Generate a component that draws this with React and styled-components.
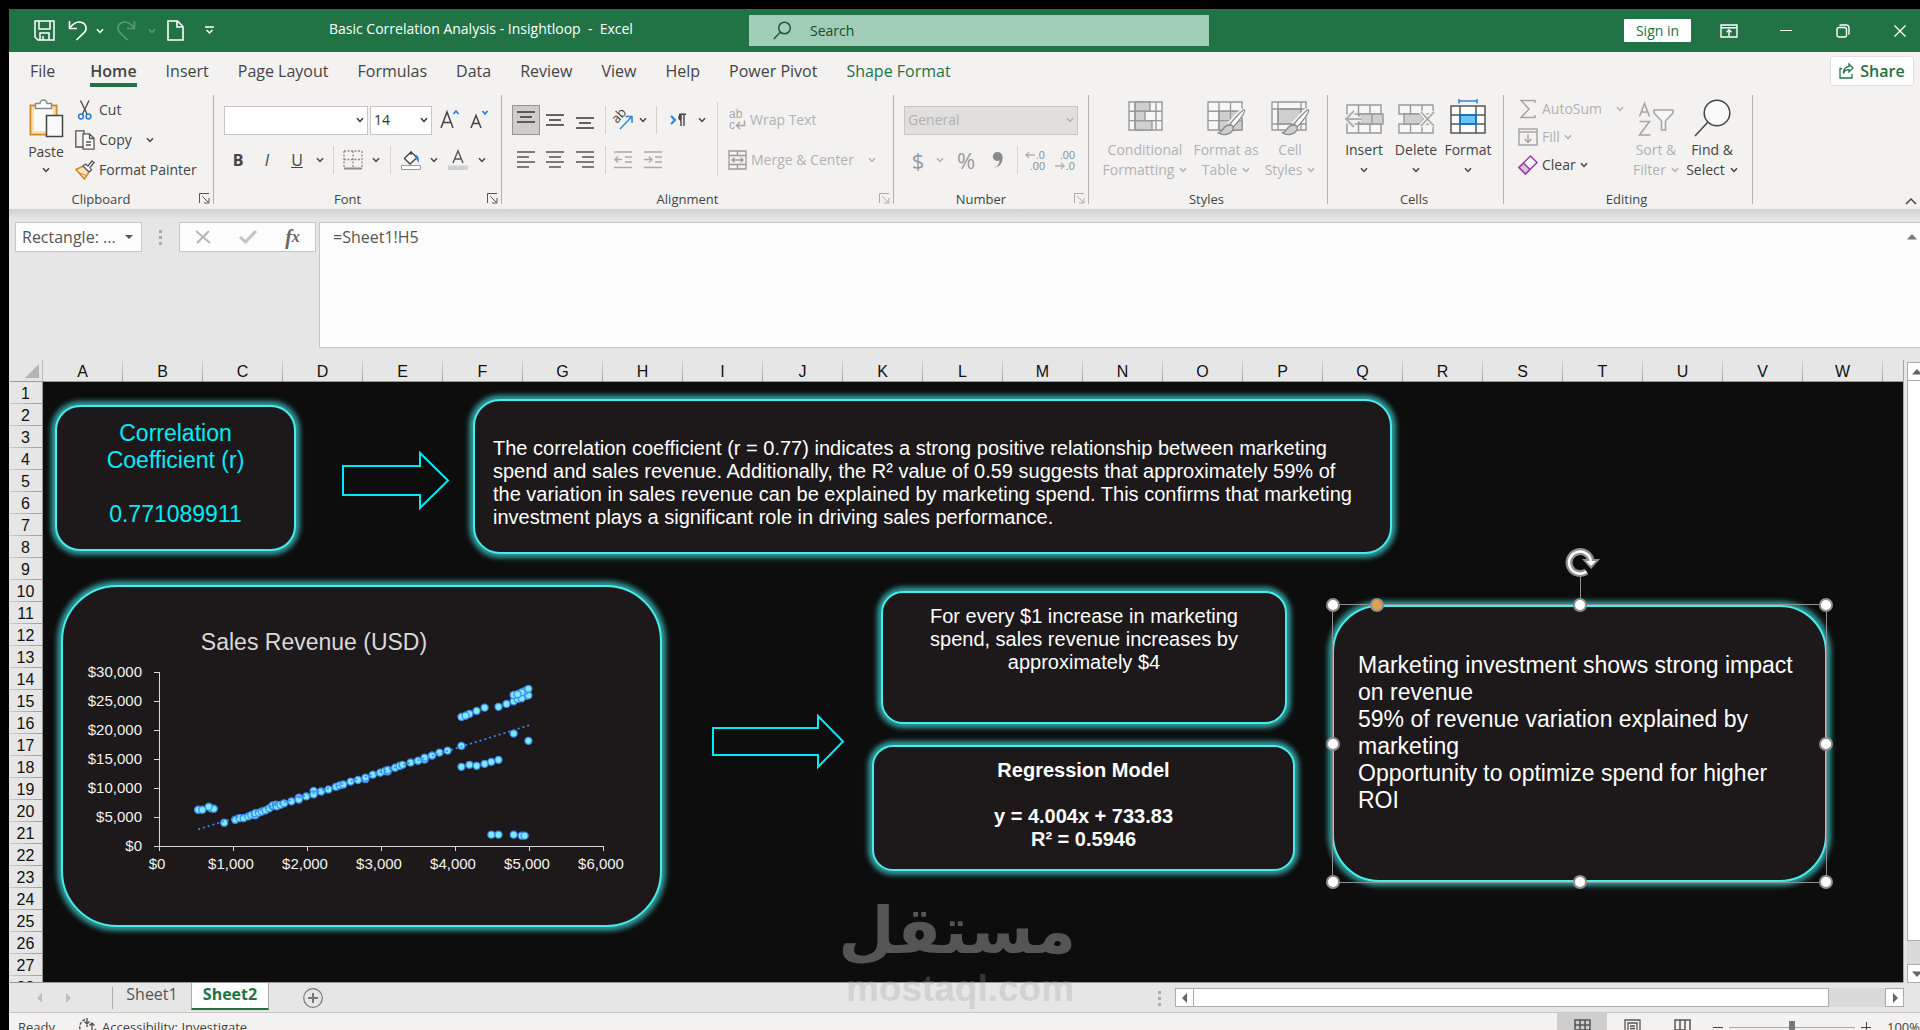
import React from 'react';
import styled, { createGlobalStyle, css } from 'styled-components';

const TABS = ['Insert', 'Page Layout', 'Formulas', 'Data', 'Review', 'View', 'Help', 'Power Pivot'];
const COLUMNS = 'ABCDEFGHIJKLMNOPQRSTUVWX'.split('');
const ROWS = Array.from({ length: 28 }, (_, i) => i + 1);

const SALES = [
    [529, 6250], [586, 6250], [705, 6480], [740, 6420], [672, 6770], [882, 4015],
    [1030, 4530], [1087, 4820], [1144, 4820], [1207, 5100], [1247, 5330], [1300, 5300],
    [1300, 5650], [1350, 5750], [1390, 5950], [1440, 6150], [1490, 6500], [1530, 6900],
    [1540, 7000], [1580, 7150], [1590, 6850], [1640, 7100], [1690, 7350], [1790, 7700],
    [1890, 8350], [1890, 8000], [1990, 8550], [2090, 9500], [2090, 8900], [2190, 9400],
    [2290, 9750], [2390, 10200], [2440, 10450], [2490, 10600], [2590, 11100], [2690, 11400],
    [2790, 11550], [2790, 11800], [2890, 12300], [2990, 12650], [3050, 12900], [3090, 12850],
    [3090, 13100], [3190, 13500], [3250, 13800], [3290, 14000], [3400, 14400], [3500, 14700],
    [3590, 14900], [3590, 15250], [3690, 15600], [3790, 16100], [3900, 16450], [4087, 17270],
    [4087, 22260], [4195, 22770], [4144, 22470], [4292, 23290], [4400, 23850], [4588, 24000],
    [4696, 24500], [4793, 24950], [4844, 25350], [4952, 25870], [4901, 25470], [4992, 25980],
    [4793, 26040], [4952, 26800], [4901, 26500], [4844, 26160], [4992, 27100],
    [4793, 19390], [4992, 18130],
    [4087, 13650], [4195, 14000], [4292, 13820], [4400, 14170], [4491, 14510], [4588, 14860],
    [4491, 1950], [4588, 1950], [4793, 1950], [4901, 1780], [4941, 1780],
];

/* Icons */

const Chevron = ({ size = 8 }) => (
    <svg width={size} height={size} viewBox="0 0 8 8" fill="none" stroke="currentColor" strokeWidth="1.5">
        <path d="M1 2.2 4 5.4 7 2.2" />
    </svg>
);

const Triangle = ({ d }) => (
    <svg width="10" height="10" viewBox="0 0 10 10" fill="currentColor"><path d={d} /></svg>
);
const UP = 'M0 7.5 5 2 10 7.5z';
const DOWN = 'M0 2.5h10L5 8z';
const LEFT = 'M7 0v10L2 5z';
const RIGHT = 'M3 0v10l5-5z';

const Launcher = () => (
    <svg width="11" height="11" viewBox="0 0 11 11" fill="none" stroke="currentColor">
        <path d="M.5 10V.5H10M3.5 3.5l6 6M10 5v5H5" />
    </svg>
);

const SaveIcon = () => (
    <svg width="21" height="21" viewBox="0 0 21 21" fill="none" stroke="#fff" strokeWidth="1.5">
        <path d="M1 1h19v19H4l-3-3zM5 1v8h11V1M6 20v-7h9v7M9 16v4" />
    </svg>
);

const UndoIcon = () => (
    <svg width="20" height="21" viewBox="0 0 20 21" fill="none" stroke="currentColor" strokeWidth="1.6">
        <path d="M1.5 1v7.5H9M1.8 8.2C5 3.5 9 1.4 13 2.2c5 1 6.600 6.500 3.600 10L8.500 20" />
    </svg>
);

const RedoIcon = () => (
    <svg width="20" height="21" viewBox="0 0 20 21" fill="none" stroke="currentColor" strokeWidth="1.600">
        <path d="M18.500 1v7.500H11M18.200 8.200C15 3.500 11 1.400 7 2.200 2 3.200.4 8.700 3.400 12.200L11.500 20" />
    </svg>
);

const PageIcon = () => (
    <svg width="17" height="21" viewBox="0 0 17 21" fill="none" stroke="#fff" strokeWidth="1.600">
        <path d="M1 1h9.500L16 6.500V20H1zM10 1v6h6" />
    </svg>
);

const CustomizeIcon = () => (
    <svg width="9" height="9" viewBox="0 0 9 9" fill="none" stroke="#fff" strokeWidth="1.500">
        <path d="M0 1h9M1.500 4l3 3 3-3" />
    </svg>
);

const SearchIcon = () => (
    <svg width="19" height="19" viewBox="0 0 19 19" fill="none" stroke="#1b5a39" strokeWidth="1.500">
        <circle cx="11.500" cy="7" r="5.800" /><path d="M7.300 11.200.8 18" />
    </svg>
);

const RibbonModeIcon = () => (
    <svg width="18" height="14" viewBox="0 0 18 14" fill="none" stroke="#fff" strokeWidth="1.400">
        <path d="M1 1h16v12H1zM1 3.800h16M9 12V6M6.500 8.200 9 5.700l2.500 2.500" />
    </svg>
);

const RestoreIcon = () => (
    <svg width="14" height="14" viewBox="0 0 14 14" fill="none" stroke="#fff" strokeWidth="1.400">
        <rect x="1" y="3.500" width="9.500" height="9.500" rx="2" />
        <path d="M3.500 1.500C4 1 4.500 1 5 1h5a3 3 0 0 1 3 3v5c0 .8-.2 1.200-.6 1.600" />
    </svg>
);

const CloseIcon = () => (
    <svg width="12" height="12" viewBox="0 0 12 12" stroke="#fff" strokeWidth="1.400"><path d="m.5.5 11 11M11.500.5l-11 11" /></svg>
);

const ShareIcon = () => (
    <svg width="15" height="16" viewBox="0 0 15 16" fill="none" stroke="#217346" strokeWidth="1.300">
        <path d="M3 5.500H1V15h12v-4M10 1l4 4-4 4V6.700C7.500 6.500 5.500 8 4.300 10.500 4.500 6.500 6.500 3.800 10 3.500z" />
    </svg>
);

const PasteIcon = () => (
    <svg width="34" height="39" viewBox="0 0 34 39" fill="none">
        <path d="M1.500 6.500h26v29h-26z" fill="#fafafa" stroke="#d48a2c" strokeWidth="2" />
        <path d="M4 9h21v24H4z" stroke="#f8dfae" strokeWidth="2" />
        <path d="M6.500 9.500v-5h4.500a3.500 3.500 0 0 1 7 0h4.500v5z" fill="#fff" stroke="#8a8a8a" strokeWidth="1.500" />
        <path d="M17.500 16.500h16v21h-16z" fill="#fafafa" stroke="#444" strokeWidth="1.500" />
    </svg>
);

const CutIcon = () => (
    <svg width="20" height="20" viewBox="0 0 20 20" fill="none">
        <path d="m5.500.5 6.500 13.500M14 .5 7.500 14" stroke="#444" strokeWidth="1.300" />
        <circle cx="6" cy="16.500" r="2.400" stroke="#2b7cd3" strokeWidth="1.500" />
        <circle cx="13.500" cy="16.500" r="2.400" stroke="#2b7cd3" strokeWidth="1.500" />
    </svg>
);

const CopyIcon = () => (
    <svg width="20" height="20" viewBox="0 0 20 20" fill="#fff" stroke="#555" strokeWidth="1.300">
        <path d="M8 17H.8V.8H9V4" fill="none" />
        <path d="M8 3.800h6.500l4.500 4.500V19.200H8zM14.500 4v4.500H19M11 12h5M11 15h5" />
    </svg>
);

const PainterIcon = () => (
    <svg width="20" height="20" viewBox="0 0 20 20" fill="none">
        <path d="M1 9.500 8.500 6l5.500 6-4.500 7z" fill="#fbe6c4" stroke="#d9822b" strokeWidth="1.500" />
        <path d="m4.500 13 7 2.500M1 9.500l8.500 9.500" stroke="#d9822b" />
        <path d="m8 6 2.500-2 2.500 2 4-5 2 1.500-4 5 1.500 2.500-2.500 2z" fill="#fff" stroke="#555" strokeWidth="1.300" />
    </svg>
);

const GrowFont = ({ down }) => (
    <svg width="20" height="22" viewBox="0 0 20 22" fill="none">
        {down
            ? <path d="m1 19 5-12.500L11 19M2.800 14.500h6.400" stroke="#444" strokeWidth="1.500" />
            : <path d="M1 19 7 3l6 16M3 13.500h8" stroke="#444" strokeWidth="1.500" />}
        <path d={down ? 'm12.500 2 2.500 3 2.500-3' : 'm13.500 5 2.500-3 2.500 3'} stroke="#2b7cd3" strokeWidth="1.700" />
    </svg>
);

const BorderIcon = () => (
    <svg width="20" height="20" viewBox="0 0 20 20" stroke="#8a8a8a" fill="none">
        <path d="M1 1h18M1 9.500h18M1 1v16M10 1v16M19 1v16" strokeDasharray="2 1.500" strokeWidth="1.300" />
        <path d="M1 18.500h18" strokeWidth="2" />
    </svg>
);

const FillIcon = () => (
    <svg width="20" height="20" viewBox="0 0 20 20" fill="none">
        <path d="M3.500 8.500 10 2l6 5.500-7 6.500zM10 5V1" fill="#fff" stroke="#444" strokeWidth="1.400" />
        <path d="M15 5c2.500 1 3.500 4 2.500 8-1-2-1.500-4-3-5z" fill="#2b7cd3" />
        <path d="M.5 15.500h19v4H.5z" fill="#fff" stroke="#999" />
    </svg>
);

const FontColorIcon = () => (
    <svg width="20" height="20" viewBox="0 0 20 20" fill="none">
        <path d="M5 13 10 .8 15 13M6.800 9h6.400" stroke="#555" strokeWidth="1.400" />
        <path d="M0 15.500h20v4.500H0z" fill="#d0d0d0" />
    </svg>
);

const LinesIcon = ({ lines, color = '#555' }) => (
    <svg width="18" height="20" viewBox="0 0 18 20" stroke={color} strokeWidth="1.500">
        {lines.map(([x1, x2, y]) => <path key={y} d={`M${x1} ${y}H${x2}`} />)}
    </svg>
);
const TOP = [[0, 18, 2], [3, 15, 7], [0, 18, 12]];
const MIDDLE = [[0, 18, 5], [3, 15, 10], [0, 18, 15]];
const BOTTOM = [[0, 18, 8], [3, 15, 13], [0, 18, 18]];
const TEXT_LEFT = [[0, 18, 2], [0, 12, 7], [0, 18, 12], [0, 12, 17]];
const TEXT_CENTER = [[0, 18, 2], [3, 15, 7], [0, 18, 12], [3, 15, 17]];
const TEXT_RIGHT = [[0, 18, 2], [6, 18, 7], [0, 18, 12], [6, 18, 17]];

const IndentIcon = ({ inward }) => (
    <svg width="18" height="18" viewBox="0 0 18 18" fill="none" stroke="#aaa" strokeWidth="1.400">
        <path d="M0 1h18M11 6h7M11 11h7M0 16.500h18" />
        <path d={inward ? 'M0 8.500h8M5 5.500l3 3-3 3' : 'M8 8.500H1M4 5.500l-3 3 3 3'} />
    </svg>
);

const OrientationIcon = () => (
    <svg width="20" height="20" viewBox="0 0 20 20" fill="none">
        <text x="0" y="0" transform="translate(4 14) rotate(-48)" fontFamily="Open Sans" fontSize="13" fill="#444">ab</text>
        <path d="M7 19 18.500 7M12.500 6.500h6.500V13" stroke="#2b88d8" strokeWidth="1.500" />
    </svg>
);

const DirectionIcon = () => (
    <svg width="16" height="14" viewBox="0 0 16 14" fill="none">
        <path d="m1 3 4 4-4 4" stroke="#2b7cd3" strokeWidth="2" />
        <path d="M11 1v12M14 1v12M9 1.200h7" stroke="#444" strokeWidth="1.400" />
        <path d="M11 1.200a3.300 3.300 0 0 0 0 6.500z" fill="#444" />
    </svg>
);

const WrapIcon = () => (
    <svg width="18" height="20" viewBox="0 0 18 20" fill="none" fontFamily="Liberation Sans" fontSize="12">
        <text x="1" y="8" fill="#a6a6a6">ab</text>
        <text x="1" y="19" fill="#a6a6a6">c</text>
        <path d="M16.500 10.500v5H9M12 12l-3.500 3.500L12 19" stroke="#a6a6a6" strokeWidth="1.500" />
    </svg>
);

const MergeIcon = () => (
    <svg width="19" height="20" viewBox="0 0 19 20" fill="none" stroke="#9a9a9a" strokeWidth="1.300">
        <path d="M1 1h17v18H1zM1 5.500h17M1 14.500h17M9.500 1v4.500M9.500 14.500V19M4 10h11M6.500 7.500 4 10l2.500 2.500M12.500 7.500 15 10l-2.500 2.500" />
    </svg>
);

const DecimalIcon = ({ less }) => (
    <svg width="20" height="22" viewBox="0 0 20 22" fill="none" fontFamily="Liberation Sans" fontSize="11">
        <text x="20" y="10" textAnchor="end" fill="#8f8f8f">{less ? '.00' : '.0'}</text>
        <text x="20" y="21" textAnchor="end" fill="#8f8f8f">{less ? '.0' : '.00'}</text>
        <path d={less ? 'M0 17h9M6 14l3 3-3 3' : 'M10 6H1M4 3 1 6l3 3'} stroke="#b0b0b0" strokeWidth="1.300" />
    </svg>
);

const Brush = () => (
    <g>
        <path d="M37 9.500 23 24" stroke="#f3f2f1" strokeWidth="7" />
        <path d="M37.500 9c1.500 1.500-7 13-11.500 17l-3-3C26.500 18.500 36 8 37.500 9z" fill="#fff" stroke="#8a8a8a" strokeWidth="1.300" />
        <path d="M22.500 24c3 0 4.500 2 3.500 4.500-2 5-9.500 6.500-14.500 3.500 5-1 4-8 11-8z" fill="#cfcfcf" stroke="#8a8a8a" strokeWidth="1.300" />
    </g>
);

const ConditionalIcon = () => (
    <svg width="35" height="36" viewBox="0 0 35 36" fill="none" stroke="#999" strokeWidth="1.400">
        <path d="M1 1h33v28H1z" fill="#f7f7f7" />
        <path d="M7 1h15v9.300H7zM7 10.300h10v9.300H7zM7 19.600h17V29H7z" fill="#cfcfcf" />
        <path d="M7 1v28M28 1v28M1 10.300h33M1 19.600h33" />
    </svg>
);

const FormatTableIcon = () => (
    <svg width="39" height="36" viewBox="0 0 39 36" fill="none" stroke="#999" strokeWidth="1.400">
        <path d="M1 1h34v28H1z" fill="#f7f7f7" />
        <path d="M12 10.300h23V29H12z" fill="#cfcfcf" />
        <path d="M12 1v28M23.500 1v28M1 10.300h34M1 19.600h34" />
        <Brush />
    </svg>
);

const CellStylesIcon = () => (
    <svg width="39" height="36" viewBox="0 0 39 36" fill="none" stroke="#999" strokeWidth="1.400">
        <path d="M1 1h34v28H1z" fill="#f7f7f7" />
        <path d="M7 8h23v15H7z" fill="#cfcfcf" />
        <path d="M7 1v28M30 1v28M1 8h34M1 23h34" />
        <Brush />
    </svg>
);

const InsertCellsIcon = () => (
    <svg width="40" height="36" viewBox="0 0 40 36" fill="none" stroke="#999" strokeWidth="1.400">
        <path d="M3 4h34v28H3z" fill="#f7f7f7" />
        <path d="M14.500 4v28M26 4v28M3 13h34M3 23h34" />
        <path d="M15 13h24v10H15z" fill="#cfcfcf" />
        <path d="M28 13v10" />
        <path d="M17 18H3M10 10l-8 8 8 8" stroke="#f3f2f1" strokeWidth="5" />
        <path d="M18 18H2M10 10l-8 8 8 8" stroke="#b0b0b0" strokeWidth="2" />
    </svg>
);

const DeleteCellsIcon = () => (
    <svg width="40" height="36" viewBox="0 0 40 36" fill="none" stroke="#999" strokeWidth="1.400">
        <path d="M3 4h34v9H3zM3 23h34v9H3z" fill="#f7f7f7" />
        <path d="M14.500 4v9M26 4v9M14.500 23v9M26 23v9" />
        <path d="M8 13h16l4 5-4 5H8z" fill="#cfcfcf" />
        <path d="m25 11 13 14M38 11 25 25" stroke="#f3f2f1" strokeWidth="5" />
        <path d="m25 11 13 14M38 11 25 25" stroke="#a6a6a6" strokeWidth="1.500" />
    </svg>
);

const FormatCellsIcon = () => (
    <svg width="36" height="36" viewBox="0 0 36 36" fill="none" stroke="#555" strokeWidth="1.500">
        <path d="M1 5h34v27H1z" fill="#fff" />
        <path d="M10 5v27M26 5v27M1 14h34M1 23h34" />
        <path d="M10 14h16v9H10z" fill="#6cc5f0" stroke="#1f6fc4" strokeWidth="2" />
        <path d="M9 0h18M9-2v4.500M27-2v4.500" stroke="#2b88d8" />
    </svg>
);

const SumIcon = () => (
    <svg width="20" height="20" viewBox="0 0 20 20" fill="none" stroke="#a6a6a6" strokeWidth="1.500">
        <path d="M17 4V1.500H3L11 10l-8 8.500h14V16" />
    </svg>
);

const FillDownIcon = () => (
    <svg width="20" height="20" viewBox="0 0 20 20" fill="none" stroke="#a6a6a6" strokeWidth="1.500">
        <path d="M1 2h18v16H1zM1 5h18M10 7.500V15M6.500 12l3.500 3.500 3.500-3.500" />
    </svg>
);

const EraserIcon = () => (
    <svg width="20" height="20" viewBox="0 0 20 20" fill="#fff" stroke="#9a3aa8" strokeWidth="1.500">
        <path d="M1 12.500 12.500 1 19 7.500 7.500 19z" />
        <path d="M1 12.500 5.500 8l6.500 6.500L7.500 19z" fill="#d5c3d8" />
    </svg>
);

const SortFilterIcon = () => (
    <svg width="36" height="36" viewBox="0 0 36 36" fill="none" stroke="#a6a6a6" strokeWidth="1.600">
        <path d="m1.500 15.500 5-13 5 13M3.200 11h6.600M1.500 20.500h10L1.500 34h11" />
        <path d="M16 9h19v3l-7.500 8v9H23.500v-9L16 12z" fill="#f7f7f7" />
    </svg>
);

const FindIcon = () => (
    <svg width="37" height="38" viewBox="0 0 37 38" fill="#fafafa" stroke="#444" strokeWidth="1.500">
        <circle cx="23" cy="14" r="12.800" /><path d="M14 23 1 37" />
    </svg>
);

const CollapseIcon = () => (
    <svg width="12" height="8" viewBox="0 0 12 8" fill="none" stroke="#444" strokeWidth="1.500"><path d="m1 7 5-5 5 5" /></svg>
);

const CancelIcon = () => (
    <svg width="16" height="14" viewBox="0 0 16 14" fill="none" stroke="#b5b5b5" strokeWidth="2"><path d="m1 1 14 12M14 1 2 13" /></svg>
);

const EnterIcon = () => (
    <svg width="18" height="14" viewBox="0 0 18 14" fill="none" stroke="#c2c2c2" strokeWidth="3"><path d="m1 7 5.500 5L17 1" /></svg>
);

const AddSheetIcon = () => (
    <svg width="20" height="20" viewBox="0 0 20 20" fill="none" stroke="#777">
        <circle cx="10" cy="10" r="9.300" strokeWidth="1.200" /><path d="M10 5v10M5 10h10" strokeWidth="2" />
    </svg>
);

const AccessibilityIcon = () => (
    <svg width="20" height="20" viewBox="0 0 20 20" fill="none" stroke="#555" strokeWidth="1.400">
        <path d="M7 2.500C3 4 1 8 2 12c.5 2 1.500 3.500 3 4.500" strokeDasharray="3 1.500" />
        <path d="M9 1v9M6.500 4.500 9 7l2.500-2.500M14 6v8M11.500 8.500 14 6l2.500 2.500M9 13l4 4 5-5" />
    </svg>
);

const NormalViewIcon = () => (
    <svg width="17" height="17" viewBox="0 0 17 17" fill="none" stroke="#555" strokeWidth="1.500"><path d="M1 1h15v15H1zM6 1v15M11 1v15M1 6h15M1 11h15" /></svg>
);
const LayoutViewIcon = () => (
    <svg width="17" height="17" viewBox="0 0 17 17" fill="none" stroke="#555" strokeWidth="1.300"><path d="M1 1h15v15H1zM4 4h9v12H4zM6 7h5M6 9.500h5M6 12h5" /></svg>
);
const BreakViewIcon = () => (
    <svg width="17" height="17" viewBox="0 0 17 17" fill="none" stroke="#555" strokeWidth="1.500"><path d="M1 16V1h15v15M1 11h10V1M6 1v10" /></svg>
);

const BlockArrow = ({ width, height, head, inset }) => {
    const r = width - 2;
    const b = height - inset;
    return (
        <svg width={width} height={height} fill="none" stroke="#00ebfa" strokeWidth="2">
            <path d={`M1 ${inset}H${head}V2L${r} ${height / 2}L${head} ${height - 2}V${b}H1z`} />
        </svg>
    );
};

const RotateIcon = () => (
    <svg width="34" height="32" viewBox="0 0 34 32" fill="none">
        <path d="M19.500 25.500A11 11 0 1 1 24 15" stroke="#8f8f8f" strokeWidth="7" />
        <path d="M15 13h18l-9 10z" fill="#8f8f8f" />
        <path d="M19.500 25.500A11 11 0 1 1 24 16" stroke="#fff" strokeWidth="2.500" />
        <path d="M19 15h10l-5 5z" fill="#fff" />
    </svg>
);

const px = (v) => 98 + (v * 444) / 6000;
const py = (v) => 261 - (v * 174) / 30000;

const SalesChart = () => (
    <ChartSvg viewBox="2 2 597 338">
        <ChartTitle x="253" y="65">Sales Revenue (USD)</ChartTitle>
        <path d="M98.500 87v174.500H542" fill="none" stroke="#d9d9d9" />
        {[0, 5, 10, 15, 20, 25, 30].map((k) => (
            <g key={k}>
                <path d={`M93 ${py(k * 1000) + 0.5}h5`} stroke="#d9d9d9" />
                <Tick x="81" y={py(k * 1000) + 5} textAnchor="end">{k ? `$${k},000` : '$0'}</Tick>
            </g>
        ))}
        {[0, 1, 2, 3, 4, 5, 6].map((k) => (
            <g key={k}>
                <path d={`M${px(k * 1000) + 0.5} 261v5`} stroke="#d9d9d9" />
                <Tick x={px(k * 1000) - 2} y="284" textAnchor="middle">{k ? `$${k},000` : '$0'}</Tick>
            </g>
        ))}
        {SALES.map(([x, y], i) => (
            <circle key={i} cx={px(x)} cy={py(y)} r="3.500" fill="#80e8fb" stroke="#3a8df0" strokeWidth="1.300" />
        ))}
        <path d={`M${px(529)} ${py(2870)}L${px(5003)} ${py(20820)}`} stroke="#3a8df0" strokeWidth="1.700" strokeDasharray="2 3" />
    </ChartSvg>
);

/* Page */

const Group = ({ label, width, launcher, dim, children }) => (
    <RibbonGroup $width={width}>
        <GroupBody>{children}</GroupBody>
        <GroupFooter>
            <GroupLabel>{label}</GroupLabel>
            {launcher && <LauncherButton aria-label={`${label} settings`} $dim={dim}><Launcher /></LauncherButton>}
        </GroupFooter>
    </RibbonGroup>
);

const Big = ({ icon, lines, width, dim }) => (
    <BigButton $width={width} $dim={dim}>
        <BigIcon>{icon}</BigIcon>
        <span>{lines[0]}</span>
        <BigLine>{lines[1]} <Chevron /></BigLine>
    </BigButton>
);

const Select = ({ label, value, width, dim }) => (
    <SelectWrap $width={width} $dim={dim}>
        <select aria-label={label} disabled={dim} defaultValue={value}><option>{value}</option></select>
        <Chevron />
    </SelectWrap>
);

export default function App() {
    return (
        <Screen>
            <GlobalStyle />
            <TitleBar>
                <QuickAccess>
                    <TitleButton $width={36} aria-label="Save"><SaveIcon /></TitleButton>
                    <TitleButton $width={32} aria-label="Undo"><UndoIcon /></TitleButton>
                    <TitleButton $width={12} aria-label="Undo list"><Chevron /></TitleButton>
                    <TitleButton $width={40} $dim aria-label="Redo"><RedoIcon /></TitleButton>
                    <TitleButton $width={12} $dim aria-label="Redo list"><Chevron /></TitleButton>
                    <TitleButton $width={34} aria-label="New"><PageIcon /></TitleButton>
                    <TitleButton $width={34} aria-label="Customize"><CustomizeIcon /></TitleButton>
                </QuickAccess>
                <DocTitle>Basic Correlation Analysis - Insightloop&nbsp; -&nbsp; Excel</DocTitle>
                <SearchBox>
                    <SearchIcon />
                    <input aria-label="Search" placeholder="Search" />
                </SearchBox>
                <SignIn>Sign in</SignIn>
                <WindowButtons>
                    <TitleButton $width={57} aria-label="Ribbon display options"><RibbonModeIcon /></TitleButton>
                    <TitleButton $width={57} aria-label="Minimize"><Dash /></TitleButton>
                    <TitleButton $width={57} aria-label="Restore"><RestoreIcon /></TitleButton>
                    <TitleButton $width={57} aria-label="Close"><CloseIcon /></TitleButton>
                </WindowButtons>
            </TitleBar>

            <TabBar>
                <Tab $first>File</Tab>
                <Tab $active>Home</Tab>
                {TABS.map((t) => <Tab key={t}>{t}</Tab>)}
                <Tab $accent>Shape Format</Tab>
                <ShareButton><ShareIcon />Share</ShareButton>
            </TabBar>

            <Ribbon>
                <Group label="Clipboard" width={205} launcher>
                    <PasteButton>
                        <PasteIcon />
                        <span>Paste</span>
                        <Chevron />
                    </PasteButton>
                    <ToolStack>
                        <TextTool><CutIcon />Cut</TextTool>
                        <TextTool><CopyIcon />Copy <SplitArrow><Chevron /></SplitArrow></TextTool>
                        <TextTool><PainterIcon />Format Painter</TextTool>
                    </ToolStack>
                </Group>

                <Group label="Font" width={288} launcher>
                    <ToolRows>
                        <ToolRow>
                            <Select label="Font name" value="" width={144} />
                            <Select label="Font size" value="14" width={62} />
                            <Tool $width={32} aria-label="Increase font size"><GrowFont /></Tool>
                            <Tool $width={28} aria-label="Decrease font size"><GrowFont down /></Tool>
                        </ToolRow>
                        <ToolRow>
                            <Letter $width={28} $bold>B</Letter>
                            <Letter $width={30} $italic>I</Letter>
                            <Letter $width={30} $underline>U</Letter>
                            <Tool $width={16} aria-label="Underline style"><Chevron /></Tool>
                            <Rule />
                            <Tool $width={28} aria-label="Borders"><BorderIcon /></Tool>
                            <Tool $width={18} aria-label="Border style"><Chevron /></Tool>
                            <Rule />
                            <Tool $width={30} aria-label="Fill color"><FillIcon /></Tool>
                            <Tool $width={16} aria-label="Fill color list"><Chevron /></Tool>
                            <Tool $width={32} aria-label="Font color"><FontColorIcon /></Tool>
                            <Tool $width={16} aria-label="Font color list"><Chevron /></Tool>
                        </ToolRow>
                    </ToolRows>
                </Group>

                <Group label="Alignment" width={392} launcher dim>
                    <ToolRows>
                        <ToolRow>
                            <Tool $width={28} $pressed aria-label="Top align"><LinesIcon lines={TOP} color="#333" /></Tool>
                            <Tool $width={30} aria-label="Middle align"><LinesIcon lines={MIDDLE} color="#333" /></Tool>
                            <Tool $width={30} aria-label="Bottom align"><LinesIcon lines={BOTTOM} color="#333" /></Tool>
                            <Rule />
                            <Tool $width={24} aria-label="Orientation"><OrientationIcon /></Tool>
                            <Tool $width={16} aria-label="Orientation list"><Chevron /></Tool>
                            <Rule />
                            <Tool $width={32} aria-label="Text direction"><DirectionIcon /></Tool>
                            <Tool $width={16} aria-label="Text direction list"><Chevron /></Tool>
                        </ToolRow>
                        <ToolRow>
                            <Tool $width={28} aria-label="Align left"><LinesIcon lines={TEXT_LEFT} /></Tool>
                            <Tool $width={30} aria-label="Center"><LinesIcon lines={TEXT_CENTER} /></Tool>
                            <Tool $width={30} aria-label="Align right"><LinesIcon lines={TEXT_RIGHT} /></Tool>
                            <Rule />
                            <Tool $width={24} aria-label="Decrease indent"><IndentIcon /></Tool>
                            <Tool $width={36} aria-label="Increase indent"><IndentIcon inward /></Tool>
                        </ToolRow>
                    </ToolRows>
                    <TallRule />
                    <ToolRows>
                        <ToolRow><TextTool $dim><WrapIcon />Wrap Text</TextTool></ToolRow>
                        <ToolRow><TextTool $dim><MergeIcon />Merge &amp; Center <SplitArrow><Chevron /></SplitArrow></TextTool></ToolRow>
                    </ToolRows>
                </Group>

                <Group label="Number" width={195} launcher dim>
                    <ToolRows>
                        <ToolRow><Select label="Number format" value="General" width={174} dim /></ToolRow>
                        <ToolRow>
                            <Letter $width={28} $dim $large>$</Letter>
                            <Tool $width={16} $dim aria-label="Currency list"><Chevron /></Tool>
                            <Letter $width={36} $dim $large>%</Letter>
                            <Tool $width={28} $dim aria-label="Comma style">
                                <svg width="12" height="18" viewBox="0 0 12 18" fill="#8a8a8a">
                                    <path d="M5.500 1A4.500 4.500 0 0 0 5 10c1 0 2-.3 2.500-.8C7.500 12.500 6 15 2.500 17 8.500 15.500 11 11 10.500 5.500 10.300 2.800 8.300 1 5.500 1z" />
                                </svg>
                            </Tool>
                            <Rule />
                            <Tool $width={24} aria-label="Increase decimal"><DecimalIcon /></Tool>
                            <Tool $width={36} aria-label="Decrease decimal"><DecimalIcon less /></Tool>
                        </ToolRow>
                    </ToolRows>
                </Group>

                <Group label="Styles" width={239}>
                    <Big width={92} dim icon={<ConditionalIcon />} lines={['Conditional', 'Formatting']} />
                    <Big width={70} dim icon={<FormatTableIcon />} lines={['Format as', 'Table']} />
                    <Big width={58} dim icon={<CellStylesIcon />} lines={['Cell', 'Styles']} />
                </Group>

                <Group label="Cells" width={176}>
                    <Big width={52} icon={<InsertCellsIcon />} lines={['Insert', '']} />
                    <Big width={52} icon={<DeleteCellsIcon />} lines={['Delete', '']} />
                    <Big width={52} icon={<FormatCellsIcon />} lines={['Format', '']} />
                </Group>

                <Group label="Editing" width={249}>
                    <ToolStack $wide>
                        <TextTool $dim><SumIcon />AutoSum <SplitArrow><Chevron /></SplitArrow></TextTool>
                        <TextTool $dim><FillDownIcon />Fill <Chevron /></TextTool>
                        <TextTool><EraserIcon />Clear <Chevron /></TextTool>
                    </ToolStack>
                    <Big width={56} dim icon={<SortFilterIcon />} lines={['Sort &', 'Filter']} />
                    <Big width={56} icon={<FindIcon />} lines={['Find &', 'Select']} />
                </Group>
                <CollapseButton aria-label="Collapse ribbon"><CollapseIcon /></CollapseButton>
            </Ribbon>

            <FormulaBar>
                <NameBox>
                    <input aria-label="Name box" defaultValue="Rectangle: ..." />
                    <Triangle d="M1 3h8L5 7z" />
                </NameBox>
                <Dots><i /><i /><i /></Dots>
                <FormulaTools>
                    <button aria-label="Cancel"><CancelIcon /></button>
                    <button aria-label="Enter"><EnterIcon /></button>
                    <FxButton aria-label="Insert function">f<small>x</small></FxButton>
                </FormulaTools>
                <FormulaField>
                    <textarea aria-label="Formula" defaultValue="=Sheet1!H5" />
                    <button aria-label="Collapse formula bar"><Triangle d={UP} /></button>
                </FormulaField>
            </FormulaBar>

            <Workspace>
                <SheetArea>
                    <ColumnHeads>
                        <Corner><svg width="14" height="14" viewBox="0 0 14 14"><path d="M14 0v14H0z" fill="#b4b4b4" /></svg></Corner>
                        {COLUMNS.map((c) => <ColumnHead key={c}>{c}</ColumnHead>)}
                    </ColumnHeads>
                    <SheetBody>
                        <RowHeads>{ROWS.map((r) => <RowHead key={r}>{r}</RowHead>)}</RowHeads>
                        <Canvas>
                            <Shape $x={12} $y={23} $w={241} $h={146} $r={25}>
                                <CyanText>Correlation<br />Coefficient (r)<br /><br />0.771089911</CyanText>
                            </Shape>
                            <Place $x={299} $y={69}><BlockArrow width={108} height={59} head={78} inset={15} /></Place>
                            <Shape $x={430} $y={17} $w={919} $h={155} $r={27}>
                                <BodyText $left>
                                    The correlation coefficient (r = 0.77) indicates a strong positive relationship between marketing
                                    spend and sales revenue. Additionally, the R² value of 0.59 suggests that approximately 59% of
                                    the variation in sales revenue can be explained by marketing spend. This confirms that marketing
                                    investment plays a significant role in driving sales performance.
                                </BodyText>
                            </Shape>
                            <Shape $x={18} $y={203} $w={601} $h={342} $r={56}><SalesChart /></Shape>
                            <Place $x={669} $y={332}><BlockArrow width={133} height={55} head={106} inset={14} /></Place>
                            <Shape $x={838} $y={209} $w={406} $h={133} $r={22}>
                                <BodyText>For every $1 increase in marketing<br />spend, sales revenue increases by<br />approximately $4</BodyText>
                            </Shape>
                            <Shape $x={829} $y={363} $w={423} $h={126} $r={21}>
                                <BodyText $bold>Regression Model<br /><br />y = 4.004x + 733.83<br />R² = 0.5946</BodyText>
                            </Shape>
                            <Shape $x={1289} $y={223} $w={495} $h={277} $r={47}>
                                <InsightText>
                                    Marketing investment shows strong impact on revenue<br />
                                    59% of revenue variation explained by marketing<br />
                                    Opportunity to optimize spend for higher ROI
                                </InsightText>
                            </Shape>
                            <Selection>
                                <Stem />
                                <Rotate><RotateIcon /></Rotate>
                                {[[0, 0], [50, 0], [100, 0], [0, 50], [100, 50], [0, 100], [50, 100], [100, 100]].map(([x, y]) => (
                                    <Handle key={`${x}-${y}`} $x={x} $y={y} />
                                ))}
                                <Handle $x={9} $y={0} $adjust />
                            </Selection>
                        </Canvas>
                    </SheetBody>
                </SheetArea>
                <VerticalScroll>
                    <ScrollButton $vertical aria-label="Scroll up"><Triangle d={UP} /></ScrollButton>
                    <Thumb $vertical />
                    <ScrollButton $vertical aria-label="Scroll down"><Triangle d={DOWN} /></ScrollButton>
                </VerticalScroll>
            </Workspace>

            <SheetBar>
                <SheetNav>
                    <button aria-label="Previous sheet"><Triangle d={LEFT} /></button>
                    <button aria-label="Next sheet"><Triangle d={RIGHT} /></button>
                </SheetNav>
                <SheetTab>Sheet1</SheetTab>
                <SheetTab $active>Sheet2</SheetTab>
                <AddSheet aria-label="New sheet"><AddSheetIcon /></AddSheet>
                <ScrollZone>
                    <Dots $tight><i /><i /><i /></Dots>
                    <HorizontalScroll>
                        <ScrollButton aria-label="Scroll left"><Triangle d={LEFT} /></ScrollButton>
                        <Thumb />
                        <ScrollButton aria-label="Scroll right"><Triangle d={RIGHT} /></ScrollButton>
                    </HorizontalScroll>
                </ScrollZone>
            </SheetBar>

            <StatusBar>
                <StatusText>Ready</StatusText>
                <StatusText><AccessibilityIcon />Accessibility: Investigate</StatusText>
                <StatusRight>
                    <ViewButton $active aria-label="Normal view"><NormalViewIcon /></ViewButton>
                    <ViewButton aria-label="Page layout view"><LayoutViewIcon /></ViewButton>
                    <ViewButton aria-label="Page break preview"><BreakViewIcon /></ViewButton>
                    <ZoomButton aria-label="Zoom out"><svg width="10" height="10" stroke="#444" strokeWidth="1"><path d="M0 5.500h10" /></svg></ZoomButton>
                    <ZoomRange type="range" min="0" max="100" defaultValue="50" aria-label="Zoom" />
                    <ZoomButton aria-label="Zoom in"><svg width="10" height="10" stroke="#444" strokeWidth="1"><path d="M0 5.500h10M5.500 0v10" /></svg></ZoomButton>
                    <ZoomValue>100%</ZoomValue>
                </StatusRight>
            </StatusBar>

            <Watermark>
                <WatermarkName lang="ar" dir="rtl">مستقل</WatermarkName>
                <WatermarkSite>mostaql.com</WatermarkSite>
            </Watermark>
        </Screen>
    );
}

/* Styled Components */

const GlobalStyle = createGlobalStyle`
    *, *::before, *::after {
        box-sizing: border-box;
    }

    body {
        margin: 0;
        overflow: hidden;
        background: #000;
        color: #444;
        font: 14px/20px "Open Sans", sans-serif;
    }

    button, input, select, textarea {
        margin: 0;
        padding: 0;
        border: 0;
        background: transparent;
        color: inherit;
        font: inherit;
        outline: none;
    }

    svg {
        display: block;
        flex: none;
        overflow: visible;
    }
`;

const Screen = styled.div`
    display: flex;
    flex-direction: column;
    height: 100vh;
    padding: 9px 0 0 9px;
    overflow: hidden;
    background: #000;
`;

const center = css`
    display: flex;
    align-items: center;
    justify-content: center;
`;

const TitleBar = styled.header`
    display: flex;
    align-items: center;
    height: 43px;
    flex: none;
    background: #217346;
    color: #fff;
`;

const QuickAccess = styled.div`
    display: flex;
    align-items: center;
    width: 320px;
    padding-left: 17px;
`;

const TitleButton = styled.button`
    ${center}
    width: ${(p) => p.$width}px;
    height: 32px;
    color: ${(p) => (p.$dim ? '#5c9a78' : '#fff')};
`;

const DocTitle = styled.div`
    width: 420px;
    padding-bottom: 4px;
    white-space: nowrap;
`;

const SearchBox = styled.label`
    display: flex;
    align-items: center;
    gap: 18px;
    flex: 0 1 460px;
    height: 31px;
    padding: 0 24px;
    background: #a0cdb5;
    color: #1b4a31;

    input::placeholder {
        color: #1b4a31;
        opacity: 1;
    }
`;

const SignIn = styled.button`
    width: 67px;
    height: 23px;
    margin-left: auto;
    border-radius: 1px;
    background: #fff;
    color: #217346;
`;

const WindowButtons = styled.div`
    display: flex;
    padding-left: 9px;
    margin-right: -8px;
`;

const Dash = styled.i`
    width: 12px;
    height: 1px;
    background: #fff;
`;

const TabBar = styled.nav`
    display: flex;
    align-items: center;
    gap: 29px;
    height: 43px;
    flex: none;
    padding: 0 6px 5px 21px;
    background: #f3f2f1;
`;

const Tab = styled.button`
    height: 32px;
    border-top: 4px solid transparent;
    border-bottom: 4px solid ${(p) => (p.$active ? '#217346' : 'transparent')};
    margin-right: ${(p) => (p.$first ? '6px' : '0')};
    font-size: 16px;
    font-weight: ${(p) => (p.$active ? 600 : 400)};
    color: ${(p) => (p.$accent ? '#217346' : '#444')};
    white-space: nowrap;
`;

const ShareButton = styled.button`
    ${center}
    gap: 6px;
    width: 84px;
    height: 30px;
    margin-left: auto;
    border: 1px solid #e1dfdd;
    border-radius: 3px;
    background: #fff;
    color: #217346;
    font-size: 16px;
    font-weight: 600;
`;

const Ribbon = styled.section`
    display: flex;
    height: 114px;
    flex: none;
    background: #f3f2f1;
`;

const RibbonGroup = styled.div`
    display: flex;
    flex-direction: column;
    flex: none;
    width: ${(p) => p.$width}px;
    height: 109px;
    border-right: 1px solid #b5b3b1;
`;

const GroupBody = styled.div`
    display: flex;
    flex: 1;
    padding-left: 10px;
`;

const GroupFooter = styled.div`
    display: flex;
    align-items: center;
    height: 16px;
    flex: none;
    padding-right: 3px;
    margin-bottom: -3px;
`;

const GroupLabel = styled.span`
    flex: 1;
    font-size: 13px;
    text-align: center;
`;

const LauncherButton = styled.button`
    margin: 0 0 2px -3px;
    padding-left: 9px;
    color: ${(p) => (p.$dim ? '#aaa' : '#555')};
`;

const PasteButton = styled.button`
    display: flex;
    flex-direction: column;
    align-items: center;
    gap: 4px;
    width: 52px;
    padding: 4px 0 0 2px;
`;

const ToolStack = styled.div`
    display: flex;
    flex-direction: column;
    width: ${(p) => (p.$wide ? '114px' : 'auto')};
    padding-left: 4px;

    > button {
        height: ${(p) => (p.$wide ? '28px' : '30px')};
    }
`;

const TextTool = styled.button`
    display: flex;
    align-items: center;
    gap: 4px;
    white-space: nowrap;
    color: ${(p) => (p.$dim ? '#b1b1b1' : '#444')};
`;

const SplitArrow = styled.span`
    padding-left: 10px;
`;

const ToolRows = styled.div`
    display: flex;
    flex-direction: column;
    gap: 10px;
    padding-top: 10px;
`;

const ToolRow = styled.div`
    display: flex;
    align-items: center;
    height: 30px;
`;

const Tool = styled.button`
    ${center}
    width: ${(p) => p.$width}px;
    height: 30px;
    color: ${(p) => (p.$dim ? '#b1b1b1' : '#444')};

    ${(p) => p.$pressed && css`
        border: 1px solid #979593;
        background: #cfcdcb;
    `}
`;

const Letter = styled(Tool)`
    font-size: ${(p) => (p.$large ? '22px' : '16px')};
    font-weight: ${(p) => (p.$bold ? 700 : 400)};
    font-style: ${(p) => (p.$italic ? 'italic' : 'normal')};
    text-decoration: ${(p) => (p.$underline ? 'underline' : 'none')};
    color: ${(p) => (p.$dim ? '#999' : '#444')};
`;

const Rule = styled.i`
    width: 1px;
    height: 28px;
    margin: 0 5px;
    background: #d2d0ce;
`;

const TallRule = styled.i`
    width: 1px;
    height: 74px;
    margin: 7px 10px 0 7px;
    background: #d2d0ce;
`;

const SelectWrap = styled.span`
    display: grid;
    align-items: center;
    width: ${(p) => p.$width}px;
    height: 29px;
    margin-right: 2px;
    border: 1px solid #c8c6c4;
    background: ${(p) => (p.$dim ? '#e1dfdd' : '#fff')};
    color: ${(p) => (p.$dim ? '#b1b1b1' : '#333')};

    > * {
        grid-area: 1 / 1;
    }

    select {
        width: 100%;
        height: 27px;
        padding: 0 3px;
        appearance: none;
        opacity: 1;
    }

    svg {
        justify-self: end;
        margin-right: 3px;
        pointer-events: none;
    }
`;

const BigButton = styled.button`
    display: flex;
    flex-direction: column;
    align-items: center;
    flex: none;
    width: ${(p) => p.$width}px;
    color: ${(p) => (p.$dim ? '#b1b1b1' : '#444')};
    white-space: nowrap;
`;

const BigIcon = styled.span`
    display: flex;
    align-items: flex-end;
    height: 42px;
    margin-bottom: 3px;
`;

const BigLine = styled.span`
    ${center}
    gap: 5px;
    height: 20px;
`;

const CollapseButton = styled.button`
    align-self: flex-end;
    margin: 0 3px 4px auto;
`;

const FormulaBar = styled.section`
    display: flex;
    align-items: flex-start;
    flex: none;
    height: 151px;
    padding: 13px 0 0 6px;
    background: linear-gradient(#cfcfcf, #e6e6e6 10px);
    font-size: 16px;
`;

const NameBox = styled.div`
    display: flex;
    align-items: center;
    width: 127px;
    height: 30px;
    padding: 0 7px 0 6px;
    border: 1px solid #c6c6c6;
    background: #fdfdfd;
    color: #555;

    input {
        flex: 1;
        min-width: 0;
    }
`;

const Dots = styled.span`
    display: flex;
    flex-direction: column;
    gap: 3px;
    width: ${(p) => (p.$tight ? '34px' : '37px')};
    padding: ${(p) => (p.$tight ? '3px 0 0 17px' : '8px 0 0 17px')};

    i {
        width: 3px;
        height: 3px;
        background: #aaa;
    }
`;

const FormulaTools = styled.div`
    display: flex;
    align-items: center;
    width: 137px;
    height: 30px;
    border: 1px solid #c6c6c6;
    background: #fdfdfd;

    button {
        ${center}
        flex: 1;
        height: 28px;
    }
`;

const FxButton = styled.button`
    color: #666;
    font: italic bold 20px/24px "Liberation Serif", serif;

    small {
        font-size: 16px;
    }
`;

const FormulaField = styled.div`
    display: flex;
    align-items: flex-start;
    flex: 1;
    height: 126px;
    margin-left: 3px;
    padding: 4px 3px 0 13px;
    border: 1px solid #c6c6c6;
    border-right: 0;
    background: #fdfdfd;
    color: #555;

    textarea {
        flex: 1;
        height: 110px;
        resize: none;
    }

    button {
        padding-top: 5px;
        color: #777;
    }
`;

const Workspace = styled.main`
    display: flex;
    flex: 1;
    min-height: 0;
    background: #e6e6e6;
`;

const SheetArea = styled.div`
    display: flex;
    flex-direction: column;
    flex: 1;
    min-width: 0;
    border-right: 1px solid #a6a6a6;
`;

const ColumnHeads = styled.div`
    display: flex;
    height: 22px;
    flex: none;
    overflow: hidden;
    border-bottom: 1px solid #999;
    color: #111;
    font: 16px/23px "Liberation Sans", sans-serif;
`;

const Corner = styled.div`
    display: flex;
    align-items: center;
    justify-content: flex-end;
    width: 34px;
    flex: none;
    padding-right: 3px;
    border-right: 1px solid #bbb;
`;

const ColumnHead = styled.div`
    width: 80px;
    flex: none;
    border-right: 1px solid;
    border-image: linear-gradient(#dcdcdc, #999) 1;
    text-align: center;
`;

const SheetBody = styled.div`
    display: flex;
    flex: 1;
    min-height: 0;
    overflow: hidden;
    border-bottom: 1px solid #999;
`;

const RowHeads = styled.div`
    width: 34px;
    flex: none;
    border-right: 1px solid #999;
    color: #111;
    font: 16px/23px "Liberation Sans", sans-serif;
`;

const RowHead = styled.div`
    height: 22px;
    border-bottom: 1px solid;
    border-image: linear-gradient(to right, #d0d0d0, #999) 1;
    text-align: center;
`;

const Canvas = styled.div`
    position: relative;
    flex: 1;
    overflow: hidden;
    background: #0d0d0d;
    font-family: "Liberation Sans", sans-serif;
`;

const Place = styled.div`
    position: absolute;
    left: ${(p) => p.$x}px;
    top: ${(p) => p.$y}px;
`;

const Shape = styled(Place)`
    width: ${(p) => p.$w}px;
    height: ${(p) => p.$h}px;
    border: 2px solid #48ecea;
    border-radius: ${(p) => p.$r}px;
    background: #1d191a;
    box-shadow: 0 0 5px 4px rgba(50, 160, 160, 0.95);
`;

const CyanText = styled.p`
    margin: 13px 0 0;
    color: #00ebfa;
    font-size: 23px;
    line-height: 27px;
    text-align: center;
`;

const BodyText = styled.p`
    margin: ${(p) => (p.$left ? '36px 30px 0 18px' : '12px 0 0')};
    color: #fff;
    font-size: 20px;
    font-weight: ${(p) => (p.$bold ? 700 : 400)};
    line-height: 23px;
    text-align: ${(p) => (p.$left ? 'left' : 'center')};
`;

const InsightText = styled.p`
    margin: 45px 20px 0 24px;
    color: #fff;
    font-size: 23px;
    line-height: 27px;
`;

const ChartSvg = styled.svg`
    width: 100%;
    font-family: "Liberation Sans", sans-serif;
`;

const ChartTitle = styled.text`
    fill: #d9d9d9;
    font-size: 23px;
    text-anchor: middle;
`;

const Tick = styled.text`
    fill: #f2f2f2;
    font-size: 15px;
`;

const Selection = styled.div`
    position: absolute;
    left: 1289px;
    top: 222px;
    width: 495px;
    height: 279px;
    border: 1px solid #8f8f8f;
`;

const Handle = styled.i`
    position: absolute;
    left: ${(p) => p.$x}%;
    top: ${(p) => p.$y}%;
    width: 14px;
    height: 14px;
    margin: -7px 0 0 -7px;
    border: 2px solid #8f8f8f;
    border-radius: 50%;
    background: ${(p) => (p.$adjust ? '#e0a050' : '#fff')};
`;

const Stem = styled.i`
    position: absolute;
    left: 50%;
    top: -30px;
    width: 1px;
    height: 30px;
    background: #8f8f8f;
`;

const Rotate = styled.span`
    position: absolute;
    left: 50%;
    top: -59px;
    margin-left: -13px;
`;

const VerticalScroll = styled.div`
    display: flex;
    flex-direction: column;
    width: 19px;
    flex: none;
    margin: 2px -6px 0 3px;
    background: #dadada;
`;

const ScrollButton = styled.button`
    ${center}
    flex: none;
    width: 19px;
    height: 19px;
    border: 1px solid #ababab;
    background: #fff;
    color: #666;
`;

const Thumb = styled.div`
    flex: none;
    border: 1px solid #ababab;
    background: #fff;

    ${(p) => (p.$vertical ? css`
        height: calc(100% - 60px);
        margin: -1px 0 auto;
    ` : css`
        width: calc(100% - 93px);
        margin: 0 auto 0 -1px;
    `)}
`;

const SheetBar = styled.section`
    display: flex;
    align-items: flex-start;
    height: 30px;
    flex: none;
    border-bottom: 1px solid #c6c6c6;
    background: #e6e6e6;
`;

const SheetNav = styled.div`
    display: flex;
    align-items: center;
    gap: 18px;
    width: 104px;
    height: 22px;
    margin-top: 4px;
    padding-left: 26px;
    border-right: 1px solid #ababab;
    color: #bdbdbd;
`;

const SheetTab = styled.button`
    width: 78px;
    height: 27px;
    padding-bottom: 5px;
    font-size: 16px;
    color: #555;

    ${(p) => p.$active && css`
        border: solid #ababab;
        border-width: 0 1px;
        border-bottom: 2px solid #217346;
        padding-bottom: 3px;
        background: #fff;
        color: #217346;
        font-weight: 700;
    `}
`;

const AddSheet = styled.button`
    margin: 5px 0 0 34px;
`;

const ScrollZone = styled.div`
    display: flex;
    align-items: flex-start;
    width: 763px;
    margin: 5px 16px 0 auto;
`;

const HorizontalScroll = styled.div`
    display: flex;
    flex: 1;
    height: 19px;
    background: #dadada;
`;

const StatusBar = styled.footer`
    display: flex;
    align-items: center;
    gap: 23px;
    height: 28px;
    flex: none;
    margin-bottom: -11px;
    padding-left: 9px;
    background: #f3f2f1;
    font-size: 13px;
`;

const StatusText = styled.span`
    display: flex;
    align-items: center;
    gap: 4px;
`;

const StatusRight = styled.div`
    display: flex;
    align-items: center;
    height: 28px;
    margin-left: auto;
`;

const ViewButton = styled.button`
    ${center}
    width: 50px;
    height: 28px;
    background: ${(p) => (p.$active ? '#d0cecc' : 'transparent')};
`;

const ZoomButton = styled.button`
    ${center}
    width: 22px;
    height: 28px;
`;

const ZoomRange = styled.input`
    width: 126px;
    height: 12px;
    appearance: none;
    background: linear-gradient(#aaa, #aaa) center / 100% 1px no-repeat;

    &::-webkit-slider-thumb {
        appearance: none;
        width: 6px;
        height: 13px;
        background: #777;
    }
`;

const ZoomValue = styled.span`
    width: 43px;
    padding-left: 10px;
`;

const Watermark = styled.div`
    position: absolute;
    left: 844px;
    top: 896px;
    width: 232px;
    text-align: center;
    pointer-events: none;
`;

const WatermarkName = styled.div`
    color: #555;
    font: bold 65px/70px "DejaVu Sans", sans-serif;
`;

const WatermarkSite = styled.div`
    color: rgba(160, 160, 160, 0.3);
    font: bold 37px/46px "Liberation Sans", sans-serif;
`;
